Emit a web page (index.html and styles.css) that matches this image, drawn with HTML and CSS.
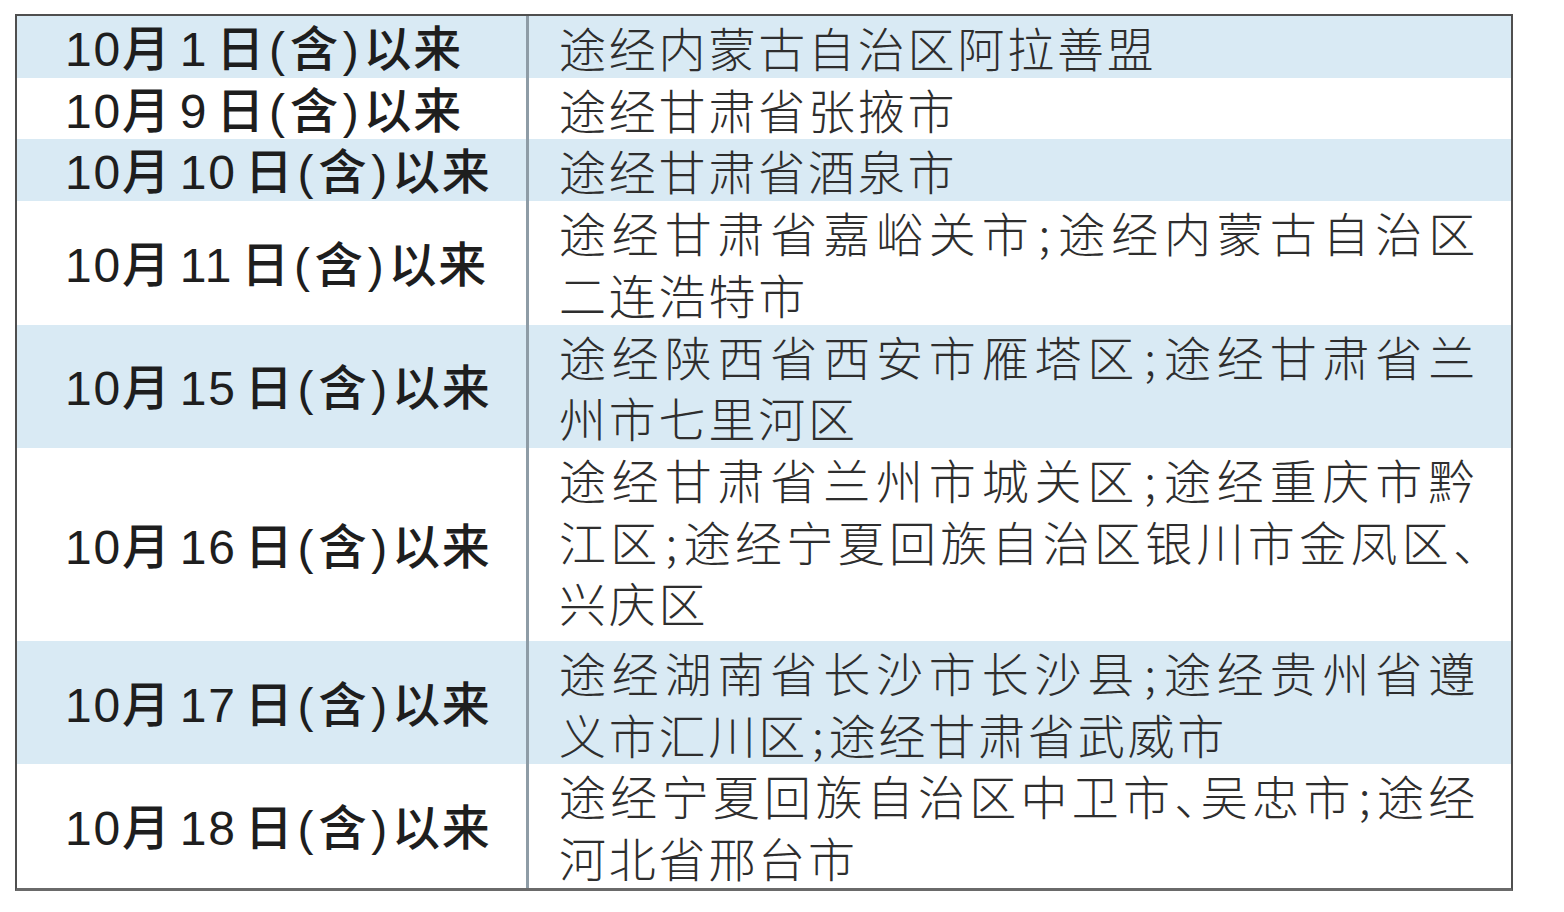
FILE: index.html
```html
<!DOCTYPE html>
<html lang="zh-CN">
<head>
<meta charset="utf-8">
<title>途经地区表</title>
<link rel="stylesheet" href="styles.css">
</head>
<body>
<div class="table">
  <div class="row alt">
    <div class="date">10月<span class="n">1</span>日<span class="par">(</span>含<span class="par">)</span>以来</div>
    <div class="place"><span class="line">途经内蒙古自治区阿拉善盟</span></div>
  </div>
  <div class="row">
    <div class="date">10月<span class="n">9</span>日<span class="par">(</span>含<span class="par">)</span>以来</div>
    <div class="place"><span class="line">途经甘肃省张掖市</span></div>
  </div>
  <div class="row alt">
    <div class="date">10月<span class="n">10</span>日<span class="par">(</span>含<span class="par">)</span>以来</div>
    <div class="place"><span class="line">途经甘肃省酒泉市</span></div>
  </div>
  <div class="row">
    <div class="date">10月<span class="n">11</span>日<span class="par">(</span>含<span class="par">)</span>以来</div>
    <div class="place">
      <span class="line full">途经甘肃省嘉峪关市<span class="semi">;</span>途经内蒙古自治区</span>
      <span class="line">二连浩特市</span>
    </div>
  </div>
  <div class="row alt">
    <div class="date">10月<span class="n">15</span>日<span class="par">(</span>含<span class="par">)</span>以来</div>
    <div class="place">
      <span class="line full">途经陕西省西安市雁塔区<span class="semi">;</span>途经甘肃省兰</span>
      <span class="line">州市七里河区</span>
    </div>
  </div>
  <div class="row tall">
    <div class="date">10月<span class="n">16</span>日<span class="par">(</span>含<span class="par">)</span>以来</div>
    <div class="place">
      <span class="line full">途经甘肃省兰州市城关区<span class="semi">;</span>途经重庆市黔</span>
      <span class="line full">江区<span class="semi">;</span>途经宁夏回族自治区银川市金凤区<span class="dun">、</span></span>
      <span class="line">兴庆区</span>
    </div>
  </div>
  <div class="row alt">
    <div class="date">10月<span class="n">17</span>日<span class="par">(</span>含<span class="par">)</span>以来</div>
    <div class="place">
      <span class="line full">途经湖南省长沙市长沙县<span class="semi">;</span>途经贵州省遵</span>
      <span class="line">义市汇川区<span class="semi">;</span>途经甘肃省武威市</span>
    </div>
  </div>
  <div class="row">
    <div class="date">10月<span class="n">18</span>日<span class="par">(</span>含<span class="par">)</span>以来</div>
    <div class="place">
      <span class="line full">途经宁夏回族自治区中卫市<span class="dun">、</span>吴忠市<span class="semi">;</span>途经</span>
      <span class="line">河北省邢台市</span>
    </div>
  </div>
</div>
</body>
</html>
```

FILE: styles.css
```css
html, body {
  margin: 0;
  padding: 0;
  background: #ffffff;
}

body {
  padding: 14px 0 0 15px;
}

.table {
  width: 1494px;
  border: 2px solid #4f4f4f;
  border-bottom: 3px solid #6a6a6a;
  display: flex;
  flex-direction: column;
  background: #ffffff;
}

.row {
  display: grid;
  grid-template-columns: 509px 1fr;
}

.row.alt {
  background: #d9eaf4;
}

.row.tall .place {
  padding-bottom: 8px;
}

.date {
  display: flex;
  align-items: center;
  padding: 6px 0 0 48px;
  font-family: "Liberation Sans", "Noto Sans CJK SC", sans-serif;
  font-size: 48px;
  font-weight: 500;
  line-height: 55.7px;
  letter-spacing: 1.8px;
  color: #1e1e1e;
  white-space: nowrap;
}

.date .n {
  margin: 0 8px;
}

.date .par {
  margin: 0 3px;
}

.place {
  border-left: 3px solid #8e9ca6;
  padding: 0 33px 0 30px;
  font-family: "Noto Sans CJK SC", sans-serif;
  font-size: 47px;
  font-weight: 300;
  line-height: 61.7px;
  letter-spacing: 2.8px;
  color: #2e2e2e;
  display: flex;
  flex-direction: column;
}

.line {
  display: block;
  white-space: nowrap;
}

.line.full {
  text-align: justify;
  text-align-last: justify;
}

.semi {
  letter-spacing: 0;
  margin: 0 5px 0 4px;
}

.dun {
  display: inline-block;
  width: 25px;
  letter-spacing: 0;
  text-align: left;
}
```
